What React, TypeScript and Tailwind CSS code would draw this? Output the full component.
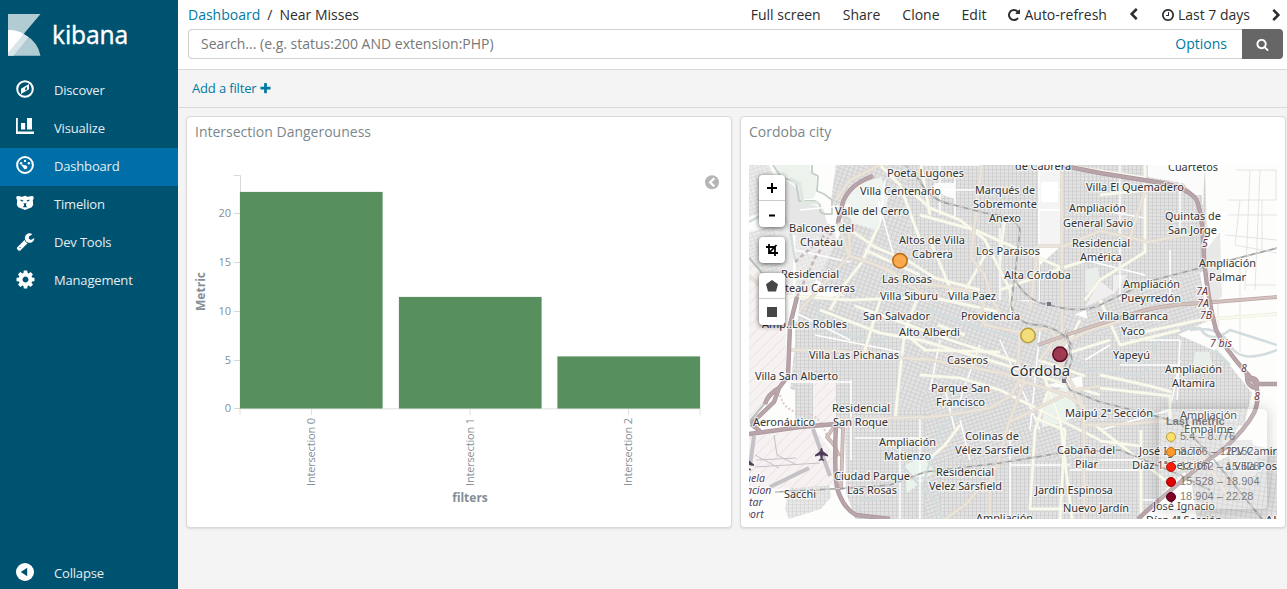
import React from "react";

/* ---------- icons ---------- */

const PATHS = {
  wrench:
    "M448 1472q0-26-19-45t-45-19-45 19-19 45 19 45 45 19 45-19 19-45zm644-420l-682 682q-37 37-90 37-52 0-91-37l-106-108q-38-36-38-90 0-53 38-91l681-681q39 98 114.5 173.5t173.5 114.5zm634-435q0 39-23 106-47 134-164.5 217.5t-258.5 83.5q-185 0-316.5-131.5t-131.5-316.5 131.5-316.5 316.5-131.5q58 0 121.5 16.5t107.5 46.5q16 11 16 28t-16 28l-293 169v224l193 107q5-3 79-48.5t135.5-81 70.5-35.5q15 0 23.5 10t8.5 25z",
  cog: "M1152 896q0-106-75-181t-181-75-181 75-75 181 75 181 181 75 181-75 75-181zm512-109v222q0 12-8 23t-20 13l-185 28q-19 54-39 91 35 50 107 138 10 12 10 25t-9 23q-27 37-99 108t-94 71q-12 0-26-9l-138-108q-44 23-91 38-16 136-29 186-7 28-36 28h-222q-14 0-24.5-8.5t-11.5-21.5l-28-184q-49-16-90-37l-141 107q-10 9-25 9-14 0-25-11-126-114-165-168-7-10-7-23 0-12 8-23 15-21 51-66.5t54-70.5q-27-50-41-99l-183-27q-13-2-21-12.5t-8-23.5v-222q0-12 8-23t19-13l186-28q14-46 39-92-40-57-107-138-10-12-10-24 0-10 9-23 26-36 98.5-107.5t94.5-71.5q13 0 26 10l138 107q44-23 91-38 16-136 29-186 7-28 36-28h222q14 0 24.5 8.5t11.5 21.5l28 184q49 16 90 37l142-107q9-9 24-9 13 0 25 10 129 119 165 170 7 8 7 22 0 12-8 23-15 21-51 66.5t-54 70.5q26 50 41 98l183 28q13 2 21 12.5t8 23.5z",
  clock: "M1024 544v448q0 14-9 23t-23 9h-320q-14 0-23-9t-9-23v-64q0-14 9-23t23-9h224v-352q0-14 9-23t23-9h64q14 0 23 9t9 23zm416 352q0-148-73-273t-198-198-273-73-273 73-198 198-73 273 73 273 198 198 273 73 273-73 198-198 73-273zm224 0q0 209-103 385.5t-279.5 279.5-385.5 103-385.5-103-279.5-279.5-103-385.5 103-385.5 279.5-279.5 385.5-103 385.5 103 279.5 279.5 103 385.5z",
  repeat:
    "M1664 256v448q0 26-19 45t-45 19h-448q-42 0-59-40-17-39 14-69l138-138q-148-137-349-137-104 0-198.5 40.5t-163.5 109.5-109.5 163.5-40.5 198.5 40.5 198.5 109.5 163.5 163.5 109.5 198.5 40.5q119 0 225-52t179-147q7-10 23-12 15 0 25 9l137 138q9 8 9.5 20.5t-7.5 22.5q-109 132-264 204.5t-327 72.5q-156 0-298-61t-245-164-164-245-61-298 61-298 164-245 245-164 298-61q147 0 284.5 55.5t244.5 156.5l130-129q29-31 70-14 39 17 39 59z",
  search:
    "M1216 832q0-185-131.5-316.5t-316.5-131.5-316.5 131.5-131.5 316.5 131.5 316.5 316.5 131.5 316.5-131.5 131.5-316.5zm512 832q0 52-38 90t-90 38q-54 0-90-38l-343-342q-179 124-399 124-143 0-273.5-55.5t-225-150-150-225-55.5-273.5 55.5-273.5 150-225 225-150 273.5-55.5 273.5 55.5 225 150 150 225 55.5 273.5q0 220-124 399l343 343q37 37 37 90z",
  left: "M1427 301l-531 531 531 531q19 19 19 45t-19 45l-166 166q-19 19-45 19t-45-19l-742-742q-19-19-19-45t19-45l742-742q19-19 45-19t45 19l166 166q19 19 19 45t-19 45z",
  plus: "M1600 736v192q0 40-28 68t-68 28h-416v416q0 40-28 68t-68 28h-192q-40 0-68-28t-28-68v-416h-416q-40 0-68-28t-28-68v-192q0-40 28-68t68-28h416v-416q0-40 28-68t68-28h192q40 0 68 28t28 68v416h416q40 0 68 28t28 68z",
};

function Glyph({ name, className }: { name: keyof typeof PATHS; className: string }) {
  return (
    <svg viewBox="0 0 1792 1792" className={className} fill="currentColor">
      <path d={PATHS[name]} />
    </svg>
  );
}

const NAV: { label: string; active?: boolean; icon: React.ReactNode }[] = [
  {
    label: "Discover",
    icon: (
      <svg viewBox="0 0 18 18" className="size-[18px]">
        <circle cx="9" cy="9" r="7.8" fill="none" stroke="white" strokeWidth="2" />
        <path d="M13 4v5.200L5 14V8.800z" fill="white" />
        <path d="M9.200 8l1.800-1.200v2.400L9.200 10.500z" fill="#005271" />
      </svg>
    ),
  },
  {
    label: "Visualize",
    icon: (
      <svg viewBox="0 0 18 18" className="size-[18px]" fill="white">
        <path d="M0 0h1.800v13.600H18v2.400H0zM5 5h4.200v6.500H5zM11 0h5v11.500h-5z" />
      </svg>
    ),
  },
  {
    label: "Dashboard",
    active: true,
    icon: (
      <svg viewBox="0 0 18 18" className="size-[18px]">
        <circle cx="9" cy="9" r="7.900" fill="none" stroke="white" strokeWidth="2" />
        <g fill="white">
          <circle cx="5.100" cy="7.200" r="1.200" />
          <circle cx="9" cy="4.900" r="1.200" />
          <circle cx="12.900" cy="7.200" r="1.200" />
          <path d="M4.800 8.200l5.400 1.200q1.700.7 1 2.600-1 1.800-3 .9z" />
        </g>
      </svg>
    ),
  },
  {
    label: "Timelion",
    icon: (
      <svg viewBox="0 0 18 18" className="size-[18px]">
        <path
          d="M.3 3Q1 1.300 3.500 2.200 6 3 7 2.400l2-.7 2 .7q1 .6 3.500-.2Q17 1.300 17.700 3q.3 1.800-.9 3.100l.4 4.600-1.400 2.600-3.200 1.200L9 16l-3.600-1.500-3.200-1.200-1.400-2.600.4-4.600Q0 4.800.3 3z"
          fill="white"
        />
        <path d="M4.500 5.500l3 .9-.8 1-2-.5zM13.500 5.500l-3 .9.8 1 2-.5zM7.300 9.200h3.400l-.8 1.400.2 1.100 1.100 1.500H6.800l1.100-1.500.2-1.100z" fill="#005271" />
      </svg>
    ),
  },
  { label: "Dev Tools", icon: <Glyph name="wrench" className="size-[19px] text-white" /> },
  { label: "Management", icon: <Glyph name="cog" className="size-[21px] text-white" /> },
];

function Sidebar() {
  return (
    <aside className="flex w-[178px] shrink-0 flex-col bg-[#005271] text-[13px] tracking-[-0.18px] text-[#e4eef1]">
      <div className="h-[72px] shrink-0">
        <svg viewBox="0 0 178 72" className="h-[72px] w-[178px]">
          <path d="M8 14h32.500L24.500 33 8 55.500z" fill="#b2ccd4" />
          <path d="M8 30q10 0 16.500 4.500Q38 42 40.500 55.700H8z" fill="#b2ccd4" />
          <path d="M8 30q9 0 16 4.200l4.500 2.800L13.500 55.700H8z" fill="#d9e6e9" />
          <path d="M8 30q9 0 15.500 4L8 53z" fill="white" />
          <text x="52" y="44" fontSize="26" fill="white" stroke="white" strokeWidth=".3" textLength="76" lengthAdjust="spacingAndGlyphs" fontFamily="'Noto Sans','Open Sans',sans-serif">
            kibana
          </text>
        </svg>
      </div>
      <nav className="flex flex-1 flex-col">
        {NAV.map((n) => (
          <a key={n.label} className={n.active ? "flex h-[38px] items-center bg-[#006fa7]" : "flex h-[38px] items-center"}>
            <span className="flex w-[50px] justify-center pb-1">{n.icon}</span>
            <span className="pb-px pl-1">{n.label}</span>
          </a>
        ))}
      </nav>
      <a className="mb-[-3px] flex h-[38px] items-center">
        <span className="flex w-[50px] justify-center pb-0.5">
          <svg viewBox="0 0 18 18" className="size-[18px]">
            <circle cx="9" cy="9" r="9" fill="white" />
            <path d="M4.800 9L11.200 4.800v8.400z" fill="#005271" />
          </svg>
        </span>
        <span className="pl-1 pt-px">Collapse</span>
      </a>
    </aside>
  );
}

function Header() {
  return (
    <header className="h-[70px] border-b border-[#d9d9d9] bg-white pl-[10px] text-[14px] leading-5 text-[#2d2d2d]">
      <div className="flex h-[29px] items-center justify-between">
        <div className="flex gap-[7px]">
          <span className="text-[#0079a5]">Dashboard</span>
          <span>/</span>
          <span>Near Misses</span>
        </div>
        <div className="flex items-center gap-[22px]">
          <span>Full screen</span>
          <span>Share</span>
          <span>Clone</span>
          <span>Edit</span>
          <span className="-ml-px flex items-center gap-[3px]">
            <Glyph name="repeat" className="size-[14px]" />
            Auto-refresh
          </span>
          <Glyph name="left" className="-ml-[2px] size-[13px]" />
          <span className="-ml-px flex items-center gap-[3px]">
            <Glyph name="clock" className="size-[14px]" />
            Last 7 days
          </span>
          <Glyph name="left" className="-ml-[2px] mr-1 size-[13px] rotate-180" />
        </div>
      </div>
      <div className="mr-1 flex h-[30px]">
        <div className="flex flex-1 items-center justify-between rounded-l border border-r-0 border-[#d0d0d0] pl-3 pr-[15px]">
          <span className="text-[#777]">Search... (e.g. status:200 AND extension:PHP)</span>
          <span className="text-[#0079a5]">Options</span>
        </div>
        <div className="flex w-[41px] items-center justify-center rounded-r bg-[#666] text-white">
          <Glyph name="search" className="size-[13px]" />
        </div>
      </div>
    </header>
  );
}

/* ---------- bar chart ---------- */

const BARS = [
  { label: "Intersection 0", x: 240, w: 142.5, y: 192, tick: 311.5 },
  { label: "Intersection 1", x: 399, w: 142.5, y: 297, tick: 470 },
  { label: "Intersection 2", x: 557.5, w: 142.5, y: 356.5, tick: 628.5 },
];

function BarChart() {
  return (
    <svg viewBox="187 147 542 378" className="h-[378px] w-[542px]" fontFamily="'Open Sans',sans-serif" fill="#848e96">
      <path d="M234 175.500h6.500v233H234M234 213.500h6M234 262.500h6M234 311.500h6M234 360.500h6" stroke="#d8d8d8" fill="none" />
      <path d="M240 408.800h460v6M240 408.800v6M311.500 409v6M470 409v6M628.500 409v6" stroke="#e0e0e0" fill="none" />
      {BARS.map((b) => (
        <g key={b.label}>
          <rect x={b.x} y={b.y} width={b.w} height={408.4 - b.y} fill="#57905e" stroke="#57905e" strokeOpacity=".35" strokeWidth=".6" />
          <text transform={`translate(${b.tick + 3.5} 486) rotate(-90)`} fontSize="11" textLength="68">
            {b.label}
          </text>
        </g>
      ))}
      {[0, 5, 10, 15, 20].map((v) => (
        <text key={v} x="231" y={412.3 - v * 9.76} fontSize="11" textAnchor="end">
          {v}
        </text>
      ))}
      <text transform="translate(205 311) rotate(-90)" fontSize="12" fontWeight="bold" textLength="39">
        Metric
      </text>
      <text x="470" y="502" fontSize="12" fontWeight="bold" textAnchor="middle">
        filters
      </text>
      <circle cx="712" cy="182.300" r="7" fill="#b5b5b5" />
      <path d="M714.300 178.200l-4.200 4.100 4.200 4.100" stroke="white" strokeWidth="2.200" fill="none" />
    </svg>
  );
}

/* ---------- map ---------- */

type Label = [text: string, x1: number, x2: number, baseline: number];

const LABELS: Label[] = [
  ["Poeta Lugones", 887, 964, 177],
  ["de Cabrera", 1015, 1071, 170],
  ["Cuartetos", 1168, 1218, 171],
  ["Villa Centenario", 860, 941, 195],
  ["Marqués de", 975, 1035, 193.5],
  ["Sobremonte", 973, 1037, 208],
  ["Anexo", 989, 1021, 222],
  ["Villa El Quemadero", 1086, 1184, 190.5],
  ["Valle del Cerro", 835, 909, 215],
  ["Ampliación", 1069, 1126, 212],
  ["General Savio", 1063, 1133, 226.5],
  ["Quintas de", 1165, 1221, 219.5],
  ["San Jorge", 1168, 1217, 233.5],
  ["Balcones del", 789, 854, 232],
  ["Chateau", 800, 843, 246],
  ["Altos de Villa", 899, 965, 244],
  ["Cabrera", 912, 953, 258],
  ["Los Paraisos", 976, 1040, 255],
  ["Residencial", 1072, 1130, 247],
  ["América", 1080, 1122, 261],
  ["Ampliación", 1199, 1256, 267],
  ["Palmar", 1209, 1246, 281],
  ["Residencial", 781, 839, 278],
  ["teau Carreras", 785, 855, 292],
  ["Las Rosas", 882, 932, 282.5],
  ["Alta Córdoba", 1004, 1071, 278.5],
  ["Ampliación", 1123, 1180, 287.5],
  ["Pueyrredón", 1121, 1181, 301.5],
  ["Villa Siburu", 880, 938, 299.5],
  ["Villa Paez", 948, 996, 299.5],
  ["San Salvador", 863, 930, 319.5],
  ["Providencia", 961, 1020, 319.5],
  ["Villa Barranca", 1098, 1168, 320],
  ["Yaco", 1121, 1145, 334.5],
  ["Amp..Los Robles", 762, 847, 328],
  ["Alto Alberdi", 899, 960, 336],
  ["Villa Las Pichanas", 809, 899, 359],
  ["Caseros", 947, 988, 363.5],
  ["Yapeyú", 1113, 1150, 358.5],
  ["Villa San Alberto", 755, 838, 380],
  ["Ampliación", 1165, 1222, 373],
  ["Altamira", 1172, 1215, 387],
  ["Parque San", 931, 990, 391.5],
  ["Francisco", 936, 985, 405.5],
  ["Residencial", 832, 890, 411.5],
  ["San Roque", 833, 888, 425.5],
  ["Maipú 2ª Sección", 1065, 1153, 417],
  ["Ampliación", 1180, 1237, 419],
  ["Empalme", 1184, 1233, 433],
  ["Aeronáutico", 753, 815, 426],
  ["Ampliación", 879, 936, 445.5],
  ["Matienzo", 884, 931, 459.5],
  ["Colinas de", 965, 1019, 439.5],
  ["Vélez Sarsfield", 955, 1029, 453.5],
  ["Cabaña del", 1057, 1115, 453.5],
  ["Pilar", 1075, 1098, 467.5],
  ["José Ignacio", 1139, 1202, 455],
  ["IPV Camir", 1227, 1277, 455],
  ["Díaz 1ª Sección", 1132, 1210, 469],
  ["a Villa Pos", 1225, 1277, 469.5],
  ["Ciudad Parque", 834, 910, 479.5],
  ["Las Rosas", 847, 897, 493.5],
  ["Residencial", 936, 994, 476],
  ["Velez Sársfield", 929, 1002, 490],
  ["Sacchi", 784, 816, 498],
  ["Jardín Espinosa", 1035, 1113, 494],
  ["Nuevo Jardín", 1063, 1129, 511.5],
  ["José Ignacio", 1153, 1215, 510],
  ["Díaz 4ª Sección", 1146, 1222, 524],
  ["Ampliación", 976, 1033, 522],
  ["Alt", 1265, 1281, 524],
];

const SHIELDS: [string, number, number][] = [
  ["5", 1205, 247],
  ["7A", 1202, 295],
  ["7A", 1203, 307],
  ["7B", 1206, 318.5],
  ["7 bis", 1221, 347],
  ["8", 1244, 372],
  ["8", 1257, 400],
];

const MOTORWAYS = [
  "M873 176Q850 184 843 202L838 222M797 297L790 325 788 376 779 388 774 402 751 424",
  "M749 434L800 427 836 424M836 424Q834 466 837 488 843 508 856 515L890 519",
  "M1060 165L1100 173 1150 181Q1186 186 1196 199 1203 212 1204 260 1208 300 1216 330 1226 350 1244 370L1256 384Q1260 400 1254 413 1246 428 1225 448 1186 475 1138 519",
  "M1256 384h21M751 424L760 431M779 388Q768 394 765 404",
  "M1247 374Q1246 386 1256 388 1260 380 1252 378",
];

const TRUNKS = [
  "M1038 345Q1085 328 1126 316 1160 304 1202 303L1277 297",
  "M836 424L843 428 841 490M836 424L827 437 834 445 839 456",
];

const PRIMARY = [
  "M749 276L775 298M838 222L849 229 850 256 890 270 930 300",
  "M880 165L850 180 836 200",
  "M838 222L849 256Q870 261 888 271L907 282 940 286 975 292 984 305 978 315 985 325 1018 332 1050 328 1060 345",
  "M849 256L800 310",
  "M982 165L977 200 973 240 971 258 985 275 992 300 1005 320",
  "M1062 165V330L1040 360M1062 246H1038L1030 310",
  "M1100 231L1148 242 1205 231M1062 247L1100 231",
  "M1148 181L1130 238",
  "M920 358L970 367 1005 374 1024 382 1065 394 1080 404",
  "M920 418L955 414 990 408 1010 396 1020 380",
  "M1010 422L1040 407 1075 390 1100 386",
  "M1024 382L1008 425 998 462 990 480 990 519M1075 390L1084 407V519",
  "M1082 425L1130 424 1165 421 1190 427 1205 460 1230 500M838 420L925 417",
  "M790 350L840 351 925 360M1048 345L1072 384 1082 408",
  "M1020 332L1018 362 1024 380M1060 345L1090 330 1130 318",
  "M945 519L965 505 980 488 995 478",
];

const SECONDARY = [
  "M913 193L930 208 960 220 985 240 1010 290 1012 320M880 165L900 185 920 240",
  "M849 229L875 247 910 262 935 278 980 290",
  "M880 222L862 262 845 284 830 310M920 215L975 230 1062 268",
  "M790 296L850 300 930 297 1000 312M855 306L895 320 950 340 1018 362",
  "M865 250L920 275M820 310L880 333 920 340 1005 365 1100 395",
  "M880 300L862 360M920 292L905 330 900 372 895 420M920 160L930 215",
  "M1062 165L1146 178M1145 165V252L1100 280 1085 300M1100 195L1145 190",
  "M920 375L960 378 1000 390 1060 420 1100 440",
  "M1050 385L1035 430 1030 509H1070M1035 418L1065 430 1060 519M1095 425L1165 480",
  "M1100 388L1170 396V425M1100 375L1150 386 1172 392",
  "M1100 441L1140 446M1141 430V519M1130 335L1200 320 1277 314",
  "M1040 365L1060 420 1072 519M1100 300L1120 345 1180 330",
  "M930 240L955 300M1005 215L1000 260M930 458L945 445 960 425",
  "M900 330L925 350 1000 352M1080 320L1062 355 1110 340",
  "M1000 290L1062 268 1100 256",
  "M938 325L965 335M1038 360L1085 376M985 255L960 300",
];

const MINOR = [
  "M800 210L850 205M795 250L850 262M790 310L850 340M815 335L900 352M878 200L895 260",
  "M885 180L880 222M920 165H980M940 165V215M955 170V220M920 190H975M1000 228V300",
  "M1039 165V250M1040 210H1062M1041 190H1060M1100 210L1145 218M1120 165V300",
  "M1085 260L1145 275M1100 320H1160M1085 360L1110 345M851 380V460M790 382H852",
  "M855 438H925M920 415V519M945 390L955 430M960 420L970 460M900 440V519",
  "M1010 465H1070M1010 430V519M1070 470H1140M1100 430L1170 410 1180 360M1142 500H1180",
  "M1000 340L1040 430M1040 330L1030 430M980 345L960 400M940 340L930 390",
  "M1180 165V230M1170 250V300M1130 340H1180L1177 400M1120 365H1180M1100 460H1145",
];

const RAILS = [
  "M905 165L920 181Q930 200 950 204L985 213Q1016 216 1020 230L1015 275 1011 305Q1015 325 1040 325 1064 330 1072 346",
  "M1015 280Q1028 303 1050 305 1080 314 1100 305L1150 281 1277 248",
  "M1072 346L1062 375 1070 390 1100 402 1145 413 1180 423 1210 455 1262 519",
  "M775 492L850 488 890 485 925 472 1000 463 1060 453 1120 450 1180 475 1210 490",
  "M1066 330L1072 360 1065 380",
];

const RIVERS = [
  "M812 290L825 330 880 341 930 310 980 328 1040 345 1090 370 1140 376Q1150 370 1155 345 1170 328 1200 328 1210 345 1230 330L1277 345",
  "M749 222L780 205 790 230 795 260",
  "M856 519L862 500 880 498 895 480 925 478 940 430 990 390M902 465L915 480 935 500 942 519",
  "M1230 365L1215 350M1190 330Q1220 325 1230 345T1277 350",
];

function Lines({ items, stroke, width, dash }: { items: string[]; stroke: string; width: number; dash?: string }) {
  return <path d={items.join("")} stroke={stroke} strokeWidth={width} strokeDasharray={dash} fill="none" strokeLinejoin="round" />;
}

function Grid({ id, size, angle }: { id: string; size: number; angle: number }) {
  return (
    <pattern id={id} width={size} height={size * 0.9} patternUnits="userSpaceOnUse" patternTransform={`rotate(${angle})`}>
      <rect width={size} height={size} fill="#e3e3e3" />
      <path d={`M0 .5H${size}M.5 0V${size}`} stroke="#cdcdcd" strokeWidth=".8" />
    </pattern>
  );
}

function CityMap() {
  return (
    <svg viewBox="749 165 528 354" className="h-[354px] w-[528px]" fontFamily="'Noto Sans','Open Sans',sans-serif">
      <defs>
        <Grid id="g0" size={4} angle={0} />
        <Grid id="g1" size={4.5} angle={20} />
        <Grid id="g2" size={4.2} angle={-18} />
        <Grid id="g3" size={5} angle={8} />
        <pattern id="hatch" width="8" height="8" patternUnits="userSpaceOnUse" patternTransform="rotate(45)">
          <rect width="8" height="8" fill="#f6f2f2" />
          <path d="M.5 0V8" stroke="#ecdfe1" strokeWidth=".8" />
        </pattern>
      </defs>
      <rect x="749" y="165" width="528" height="354" fill="#fdfdfc" />

      <path d="M749 165h20l12 30-14 16-18 6zM749 232l34-8 4 60-12 14-26-24z" fill="url(#g2)" opacity=".7" />
      <path d="M795 215l38 10 5 20-30 48-12-8zM797 250l8 38-10 10z" fill="url(#g2)" opacity=".6" />
      <path d="M836 165h75l10 50-8 80-60 5-36-20 28-55-14-25z" fill="url(#g1)" />
      <path d="M775 165h35q-2 8 6 9v17q-1 8-6 8h-9l-4-12-16-10z" fill="#edf2ed" />
      <path d="M785 180l14 10 4 12 20 6 6 22-20 10-24-8z" fill="#e6e6e6" />
      <path d="M773 165l8 12 15 5 3 19 16 0q7 3 5 10 2 4 12 3V200l-8-6-7-3 1-15-6-3V165" fill="none" stroke="#c3cec7" strokeWidth="1.800" />
      <path d="M790 178l10 6 3 18 16 1" fill="none" stroke="#dfe7e1" strokeWidth="3" />
      <path d="M856 185l25-8 8 18-10 36-26-8-12-20z" fill="#eff4f1" />
      <path d="M905 165h134v135H915z" fill="url(#g0)" />
      <path d="M935 183h20v16l-24-8z" fill="#fbfbfb" />
      <path d="M1039 165h23v80h-23z" fill="#f4f4f4" />
      <path d="M1041 182h17v20h-17z" fill="#ffffff" />
      <path d="M1062 165h143l3 105-108 35-60 22v-62l22-20z" fill="url(#g0)" />
      <path d="M1148 165h57l-2 40-20-22-35-6z" fill="#fbfbfb" />
      <path d="M1152 195h50v75l-50 22z" fill="url(#g0)" />
      <path d="M800 300l120-12 120 15 60 20-8 50-170 46-132-30z" fill="url(#g1)" />
      <path d="M795 322h105v100H795z" fill="url(#g0)" />
      <path d="M845 420l95-15v114h-84l-10-26z" fill="url(#g0)" />
      <path d="M925 392l85-10 90 10v100l-175 27z" fill="url(#g2)" />
      <path d="M940 460h200v59H940z" fill="url(#g0)" />
      <path d="M1085 305l115-32 8 48-70 32-44 2z" fill="url(#g2)" />
      <path d="M1080 335l90-4 50 22 32 40-8 32-70 10-90-20z" fill="url(#g0)" />
      <path d="M1078 420l112-2 40 15-60 52-30 34h-62z" fill="url(#g0)" />
      <path d="M1168 412l80-4-20 38-42 28-26-26zM1190 475l60-30 27 5v69h-80z" fill="url(#g3)" />
      <path d="M1206 250l14-18 2 65-14 8zM1222 440h30l8 30-20 18z" fill="#e8e8e8" />
      <path d="M793 467h34l4 30-10 12-32 10-4-10z" fill="url(#g0)" opacity=".8" />
      <path d="M1045 395l25-10 8 30-14 8-22 4zM905 465l18-8 12 14-28 22z" fill="#eaf3ec" />
      <path d="M775 225h18v70h-14z" fill="#ececec" />
      <path d="M1195 352l14 0 4 14-20 0zM1085 270l12-3 6 22-18 4z" fill="#e9eeeb" />
      <path d="M1100 281l13 10v-16l14 0-12 18-30 14z" fill="#f1eef0" />
      <path d="M1236 170h40v30h-48M1240 200l-5 45 42 8M1250 170l-5 120M1262 200v50M1228 215h49M1225 235l52 5M1240 262v90M1246 285h30M1218 300v120M1260 170l-5 120" stroke="#dedede" strokeWidth=".8" fill="none" />

      <path d="M749 256l26 40-1 30 12 2v48l-37 46z" fill="url(#hatch)" />
      <path d="M813 383h23v43h-23zM749 432l64-5 22 28 3 30-89 6z" fill="url(#hatch)" />
      <path d="M749 258l30 34M788 376l-38 45" stroke="#b5c2b5" strokeWidth="2" fill="none" />
      <g stroke="#c4c2c6" fill="none">
        <path d="M813 429l17 47M754 436l-4 30M770 487l39-19" strokeWidth="4" />
        <path d="M755 467l65-4M774 435l3 20 20 10M755 455l24 13M756 460l40-2" strokeWidth="1" />
      </g>

      <Lines items={RIVERS} stroke="#d3dcdf" width={2.5} />
      <Lines items={MINOR} stroke="#ffffff" width={1.5} />
      <Lines items={SECONDARY} stroke="#e8e6dc" width={3.4} />
      <Lines items={SECONDARY} stroke="#fafaec" width={2.5} />
      <Lines items={PRIMARY} stroke="#ddd5ca" width={3.6} />
      <Lines items={PRIMARY} stroke="#ebe4da" width={2.5} />
      <Lines items={["M795 262Q820 240 838 222M797 297L815 258 832 232"]} stroke="#c9b6b8" width={2.6} dash="4 3" />
      <Lines items={["M780 395Q785 412 800 412 820 412 827 437"]} stroke="#dfc9cb" width={2} dash="2 2" />
      <Lines items={TRUNKS} stroke="#bba7a3" width={3.8} />
      <Lines items={TRUNKS} stroke="#d3c2bd" width={2.4} />
      <Lines items={MOTORWAYS} stroke="#a9949a" width={4.4} />
      <Lines items={MOTORWAYS} stroke="#b8a4a9" width={3.2} />
      <Lines items={RAILS} stroke="#a0a0a0" width={1.7} />
      <Lines items={RAILS} stroke="#ececec" width={0.8} dash="5 5" />
      <path d="M1047 302h4v4h-4zM1062 379h4v4h-4z" fill="#77718a" />

      <g fill="#4f3c5c">
        <path d="M821.500 448q1.300 0 1.300 3l5.200 4v1.600l-5.200-1.400-.4 3.300 1.800 1.500v1l-2.700-.7-2.700.7v-1l1.800-1.500-.4-3.300-5.200 1.400V455l5.200-4q0-3 1.300-3z" />
        <path d="M749 460.500l5 4v1.600l-5-1.400zM749 468l2 1.500v1l-2-.6z" />
      </g>

      <g fontSize="11.500" fill="#333" stroke="white" strokeOpacity=".7" strokeWidth="2.500" paintOrder="stroke" strokeLinejoin="round">
        {LABELS.map(([t, a, b, y]) => (
          <text key={t + a + y} x={a} y={y} textLength={b - a} lengthAdjust="spacingAndGlyphs">
            {t}
          </text>
        ))}
        <text x="1010" y="376" fontSize="15" textLength="60" lengthAdjust="spacingAndGlyphs">
          Córdoba
        </text>
      </g>
      <g fontSize="10.500" fontStyle="italic" stroke="white" strokeOpacity=".8" strokeWidth="2.500" paintOrder="stroke">
        <g fill="#6b3645" textAnchor="middle">
          {SHIELDS.map(([t, x, y]) => (
            <text key={t + y} x={x} y={y}>
              {t}
            </text>
          ))}
        </g>
        <g fill="#54415f">
          <text x="745" y="482">uela</text>
          <text x="746" y="494">acion</text>
          <text x="749" y="506">tar</text>
          <text x="744" y="518">port</text>
        </g>
      </g>

      <g strokeWidth="1.500" fillOpacity=".85">
        <circle cx="900" cy="260.700" r="7.200" fill="#fd9d34" stroke="#b96c17" />
        <circle cx="1028" cy="335.500" r="7.200" fill="#f6dd6a" stroke="#b9a03a" />
        <circle cx="1060" cy="354.300" r="7.200" fill="#931b3a" stroke="#5c0c22" />
      </g>
    </svg>
  );
}

const LEGEND = [
  { range: "5.4 – 8.776", dot: "size-[10px] rounded-full border border-[#b9a03a] bg-[#fbdf6b]" },
  { range: "8.776 – 12.152", dot: "size-[10px] rounded-full border border-[#bd711c] bg-[#fd992c]" },
  { range: "12.152 – 15.528", dot: "size-[10px] rounded-full border border-[#b8170a] bg-[#fb1d0d]" },
  { range: "15.528 – 18.904", dot: "size-[10px] rounded-full border border-[#9c0000] bg-[#dc0000]" },
  { range: "18.904 – 22.28", dot: "size-[10px] rounded-full border border-[#52001a] bg-[#800026]" },
];

const CONTROL = "flex w-[26px] flex-col divide-y divide-[#ccc] overflow-hidden rounded bg-white shadow-[0_1px_5px_rgba(0,0,0,0.65)]";

function MapPanel() {
  return (
    <div className="relative ml-2 mt-[18px] h-[354px] w-[528px] overflow-hidden">
      <CityMap />
      <div className="absolute left-[10px] top-[10px] flex flex-col gap-[10px] text-black">
        <div className={CONTROL}>
          <span className="flex h-[26px] items-center justify-center">
            <svg viewBox="0 0 10 10" className="size-[10px]">
              <path d="M0 5h10M5 0v10" stroke="black" strokeWidth="2" />
            </svg>
          </span>
          <span className="flex h-[26px] items-center justify-center">
            <svg viewBox="0 0 10 10" className="size-[10px]">
              <path d="M2 6.500h6" stroke="black" strokeWidth="2" />
            </svg>
          </span>
        </div>
        <div className={CONTROL}>
          <span className="flex h-[26px] items-center justify-center">
            <svg viewBox="0 0 12 12" className="size-[12px]">
              <path d="M3 0v9h9M0 3h9v9M3 9l7.500-8" stroke="black" strokeWidth="1.800" fill="none" />
            </svg>
          </span>
        </div>
        <div className={CONTROL}>
          <span className="flex h-[26px] items-center justify-center">
            <svg viewBox="0 0 12 12" className="size-[12px]">
              <path d="M6 0l6 4.300-2 7.200H2L0 4.300z" fill="#464646" />
            </svg>
          </span>
          <span className="flex h-[26px] items-center justify-center">
            <svg viewBox="0 0 10 10" className="size-[10px]">
              <rect width="10" height="10" fill="#464646" />
            </svg>
          </span>
        </div>
      </div>
      <div className="absolute bottom-[10px] right-[10px] h-[100px] w-[108px] rounded-[5px] bg-white/15 pl-[7px] pt-[5px] font-['Liberation_Sans',sans-serif] text-[11px] leading-[15px] text-[#666]/85 shadow-[0_0_15px_rgba(0,0,0,0.2)]">
        <div className="font-bold">Last metric</div>
        {LEGEND.map((l) => (
          <div key={l.range} className="flex h-[15px] items-center gap-[4px] whitespace-nowrap">
            <span className={l.dot} />
            {l.range}
          </div>
        ))}
      </div>
    </div>
  );
}

function Panel({ title, className, children }: { title: string; className: string; children: React.ReactNode }) {
  return (
    <section className={className}>
      <h2 className="h-[30px] pl-2 pt-[5px] text-[14px] leading-5 text-[#7b878b]">{title}</h2>
      {children}
    </section>
  );
}

export default function App() {
  return (
    <div className="flex h-[589px] w-[1287px] overflow-hidden bg-[#f4f4f4] font-['Open_Sans',sans-serif]">
      <Sidebar />
      <main className="flex min-w-0 flex-1 flex-col">
        <Header />
        <div className="flex h-[38px] items-center gap-[2px] border-b border-[#d9d9d9] pl-[14px] text-[13px] tracking-[-0.15px] text-[#0079a5]">
          Add a filter
          <Glyph name="plus" className="size-[13px]" />
        </div>
        <div className="flex gap-2 pl-2 pt-2">
          <Panel title="Intersection Dangerouness" className="h-[412px] w-[546px] rounded border border-[#d9d9d9] bg-white shadow-[0_1px_2px_rgba(0,0,0,0.1)]">
            <BarChart />
          </Panel>
          <Panel title="Cordoba city" className="h-[412px] w-[546px] rounded border border-[#d9d9d9] bg-white shadow-[0_1px_2px_rgba(0,0,0,0.1)]">
            <MapPanel />
          </Panel>
        </div>
      </main>
    </div>
  );
}
